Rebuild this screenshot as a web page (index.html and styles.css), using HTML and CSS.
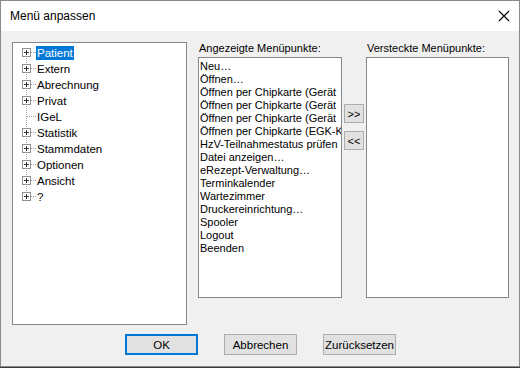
FILE: index.html
```html
<!DOCTYPE html>
<html lang="de">
<head>
    <meta charset="UTF-8">
    <title>Menü anpassen</title>
    <link rel="stylesheet" href="styles.css">
</head>
<body>
<svg class="defs" width="0" height="0">
    <symbol id="plus" viewBox="0 0 14 16">
        <rect x="0.5" y="4.5" width="8" height="8" fill="#fff" stroke="#919191"/>
        <path d="M2 8.5h5M4.5 6v5" stroke="#333" fill="none"/>
        <path d="M9 8.5h5" stroke="#a0a0a0" stroke-dasharray="1 1" fill="none"/>
    </symbol>
</svg>
<div class="window">
    <div class="titlebar">
        <span class="title">Menü anpassen</span>
        <svg class="close" width="12" height="12" viewBox="0 0 12 12">
            <path d="M1 1l10 10M11 1L1 11" stroke="#000" stroke-width="1.1" fill="none"/>
        </svg>
    </div>
    <div class="content">
        <div class="main">
            <div class="tree">
                <div class="node">
                    <svg class="branch" width="14" height="16"><path d="M4.5 12v4" stroke="#a0a0a0" stroke-dasharray="1 1"/><use href="#plus"/></svg>
                    <span class="label selected">Patient</span>
                </div>
                <div class="node">
                    <svg class="branch" width="14" height="16"><path d="M4.5 0v16" stroke="#a0a0a0" stroke-dasharray="1 1"/><use href="#plus"/></svg>
                    <span class="label">Extern</span>
                </div>
                <div class="node">
                    <svg class="branch" width="14" height="16"><path d="M4.5 0v16" stroke="#a0a0a0" stroke-dasharray="1 1"/><use href="#plus"/></svg>
                    <span class="label">Abrechnung</span>
                </div>
                <div class="node">
                    <svg class="branch" width="14" height="16"><path d="M4.5 0v16" stroke="#a0a0a0" stroke-dasharray="1 1"/><use href="#plus"/></svg>
                    <span class="label">Privat</span>
                </div>
                <div class="node">
                    <svg class="branch" width="14" height="16"><path d="M4.5 0v16M5 8.5h9" stroke="#a0a0a0" stroke-dasharray="1 1"/></svg>
                    <span class="label">IGeL</span>
                </div>
                <div class="node">
                    <svg class="branch" width="14" height="16"><path d="M4.5 0v16" stroke="#a0a0a0" stroke-dasharray="1 1"/><use href="#plus"/></svg>
                    <span class="label">Statistik</span>
                </div>
                <div class="node">
                    <svg class="branch" width="14" height="16"><path d="M4.5 0v16" stroke="#a0a0a0" stroke-dasharray="1 1"/><use href="#plus"/></svg>
                    <span class="label">Stammdaten</span>
                </div>
                <div class="node">
                    <svg class="branch" width="14" height="16"><path d="M4.5 0v16" stroke="#a0a0a0" stroke-dasharray="1 1"/><use href="#plus"/></svg>
                    <span class="label">Optionen</span>
                </div>
                <div class="node">
                    <svg class="branch" width="14" height="16"><path d="M4.5 0v16" stroke="#a0a0a0" stroke-dasharray="1 1"/><use href="#plus"/></svg>
                    <span class="label">Ansicht</span>
                </div>
                <div class="node">
                    <svg class="branch" width="14" height="16"><path d="M4.5 0v4" stroke="#a0a0a0" stroke-dasharray="1 1"/><use href="#plus"/></svg>
                    <span class="label">?</span>
                </div>
            </div>

            <div class="column">
                <div class="caption">Angezeigte Menüpunkte:</div>
                <div class="listbox">
                    <div class="item">Neu…</div>
                    <div class="item">Öffnen…</div>
                    <div class="item">Öffnen per Chipkarte (Gerät</div>
                    <div class="item">Öffnen per Chipkarte (Gerät</div>
                    <div class="item">Öffnen per Chipkarte (Gerät</div>
                    <div class="item">Öffnen per Chipkarte (EGK-K</div>
                    <div class="item">HzV-Teilnahmestatus prüfen</div>
                    <div class="item">Datei anzeigen…</div>
                    <div class="item">eRezept-Verwaltung…</div>
                    <div class="item">Terminkalender</div>
                    <div class="item">Wartezimmer</div>
                    <div class="item">Druckereinrichtung…</div>
                    <div class="item">Spooler</div>
                    <div class="item">Logout</div>
                    <div class="item">Beenden</div>
                </div>
            </div>

            <div class="movers">
                <button class="move">&gt;&gt;</button>
                <button class="move">&lt;&lt;</button>
            </div>

            <div class="column hidden-items">
                <div class="caption">Versteckte Menüpunkte:</div>
                <div class="listbox"></div>
            </div>
        </div>

        <div class="actions">
            <button class="btn default">OK</button>
            <button class="btn">Abbrechen</button>
            <button class="btn">Zurücksetzen</button>
        </div>
    </div>
</div>
</body>
</html>
```

FILE: styles.css
```css
* {
    margin: 0;
    padding: 0;
    box-sizing: border-box;
}

body {
    background: #3a3a3a;
    font-family: "Liberation Sans", Arial, sans-serif;
    font-size: 12px;
    color: #000;
}

.defs {
    position: absolute;
}

.window {
    width: 520px;
    height: 367px;
    border: 1px solid #8a8a8a;
    background: #f0f0f0;
    display: flex;
    flex-direction: column;
}

.titlebar {
    height: 30px;
    background: #fff;
    display: flex;
    align-items: center;
    justify-content: space-between;
    padding: 0 9px 0 9px;
}

.title {
    font-size: 12px;
    padding-bottom: 1px;
}

.content {
    padding: 11px 10px 0 11px;
    display: flex;
    flex-direction: column;
}

.main {
    display: flex;
    align-items: flex-start;
}

.tree {
    width: 175px;
    height: 283px;
    background: #fff;
    border: 1px solid #828790;
    padding: 1px 0 0 9px;
}

.node {
    display: flex;
    align-items: center;
    height: 16px;
}

.branch {
    flex: none;
    display: block;
}

.label {
    padding: 0 1px;
    font-size: 11.5px;
    line-height: 14px;
    height: 14px;
    margin-top: 1px;
    white-space: nowrap;
}

.label.selected {
    background: #0078d7;
    color: #fff;
}

.column {
    margin-left: 11px;
    display: flex;
    flex-direction: column;
}

.column.hidden-items {
    margin-left: 2px;
}

.caption {
    height: 15px;
    line-height: 12px;
    font-size: 11px;
    padding-left: 1px;
    white-space: nowrap;
}

.listbox {
    width: 144px;
    height: 241px;
    background: #fff;
    border: 1px solid #828790;
    padding: 2px 0 0 1px;
    overflow: hidden;
}

.hidden-items .listbox {
    width: 143px;
}

.item {
    height: 13px;
    line-height: 13px;
    font-size: 11px;
    white-space: nowrap;
}

.movers {
    margin: 62px 0 0 2px;
    display: flex;
    flex-direction: column;
    gap: 8px;
}

.move {
    width: 20px;
    height: 19px;
    padding: 0;
    background: #e1e1e1;
    border: 1px solid #adadad;
    font-family: inherit;
    font-size: 11px;
    color: #000;
}

.actions {
    margin-top: 9px;
    display: flex;
    justify-content: center;
    gap: 26px;
}

.btn {
    width: 73px;
    height: 21px;
    padding: 0;
    background: #e1e1e1;
    border: 1px solid #adadad;
    font-family: inherit;
    font-size: 11.5px;
    color: #000;
}

.btn.default {
    border: 2px solid #0078d7;
}
```
